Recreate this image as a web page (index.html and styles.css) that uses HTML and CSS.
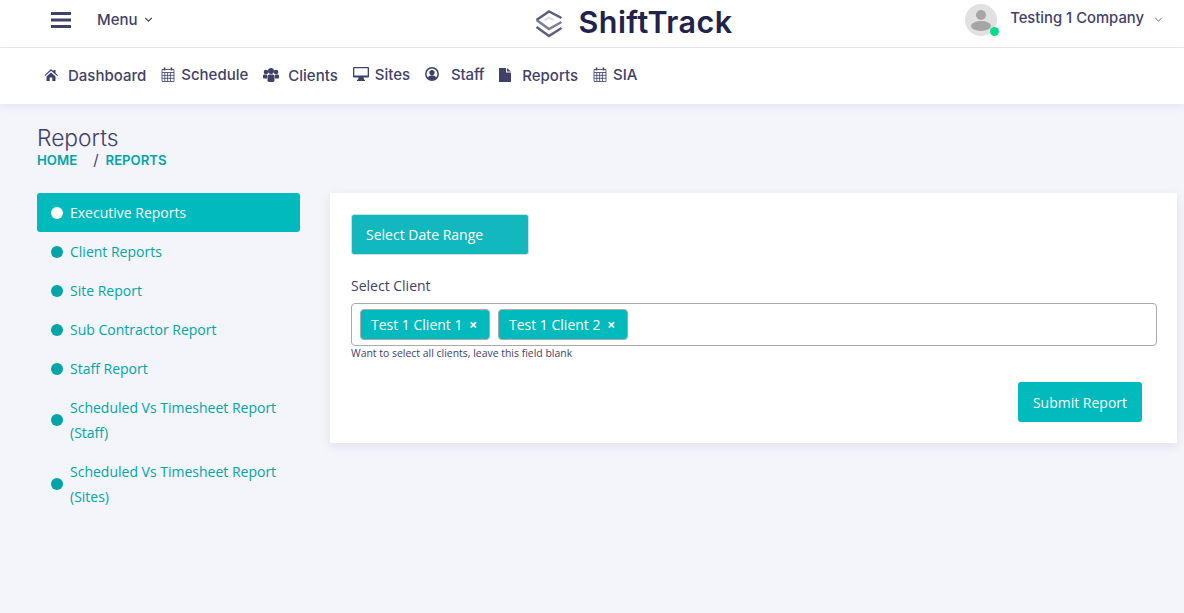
FILE: index.html
```html
<!DOCTYPE html>
<html lang="en">
<head>
  <meta charset="UTF-8" />
  <title>ShiftTrack Reports</title>
  <meta name="viewport" content="width=device-width, initial-scale=1" />
  <link rel="stylesheet" href="styles.css">
</head>
<body>

  <header class="topbar">
    <div class="topbar-left">
      <svg class="burger" width="20" height="16" viewBox="0 0 20 16"><path d="M0 0h20v3H0zM0 6.500h20v3H0zM0 13h20v3H0z" fill="#3f4168"/></svg>
      <span class="menu-label">Menu</span>
      <svg class="chevron" width="9" height="5" viewBox="0 0 10 6"><path d="M1 1l4 4 4-4" fill="none" stroke="#3f4168" stroke-width="1.400"/></svg>
    </div>
    <div class="brand">
      <svg width="28" height="28" viewBox="0 0 28 28">
        <path d="M1.500 10L14 1.500 26.500 8" fill="none" stroke="#5d5e80" stroke-width="2.500"/>
        <path d="M1.500 10L14 19l12.500-7" fill="none" stroke="#7b7c98" stroke-width="2.500"/>
        <path d="M9.500 10.500L14 7.500l4.500 3" fill="none" stroke="#d9d9e3" stroke-width="2"/>
        <path d="M1.500 17L14 26l12.500-8" fill="none" stroke="#5d5e80" stroke-width="2.500"/>
      </svg>
      <span class="brand-name">ShiftTrack</span>
    </div>
    <div class="user">
      <div class="avatar">
        <svg width="32" height="32" viewBox="0 0 32 32">
          <circle cx="16" cy="16" r="16" fill="#e1e1e1"/>
          <circle cx="16" cy="11" r="5" fill="#a5a5a5"/>
          <ellipse cx="16" cy="22" rx="10" ry="5" fill="#a5a5a5"/>
        </svg>
        <span class="status-dot"></span>
      </div>
      <span class="user-name">Testing 1 Company</span>
      <svg class="chevron" width="9" height="5" viewBox="0 0 10 6"><path d="M1 1l4 4 4-4" fill="none" stroke="#5f607f" stroke-width="1.100"/></svg>
    </div>
  </header>

  <nav class="mainnav">
    <a href="#" class="nav-link">
      <svg width="14" height="12" viewBox="0 0 14 12"><path d="M7 0l2.500 2.200V1h2v3l2.500 2.300-.7.800L7 1.800 1.200 7.100l-.7-.8zM2.500 7.500L7 3.400l4.500 4.100V12H8.300V8.500H5.700V12H2.500z" fill="#3f4168"/></svg>
      <span class="gap-10">Dashboard</span>
    </a>
    <a href="#" class="nav-link raised">
      <svg width="14" height="15" viewBox="0 0 14 15"><path d="M3.500 .5v3M10.500 .5v3" stroke="#3f4168" stroke-width="1.600" fill="none"/><path d="M1 2.500h12v12H1zM1 5.500h12M3.800 5.500v9M6.600 5.500v9M9.400 5.500v9M1 8.400h12M1 11.300h12" fill="none" stroke="#4c4e74" stroke-width=".9"/></svg>
      <span class="gap-6">Schedule</span>
    </a>
    <a href="#" class="nav-link">
      <svg width="16" height="14" viewBox="0 0 16 14"><g fill="#3f4168"><circle cx="3" cy="4" r="2.300"/><circle cx="13" cy="4" r="2.300"/><circle cx="8" cy="3" r="3"/><path d="M0 7.500C0 6.500 1 6.500 3 6.500c.7 0 1 .2 1 .5v3.500H1C.3 10.500 0 10 0 9.500zM16 7.500c0-1-1-1-3-1-.7 0-1 .2-1 .5v3.500h3c.7 0 1-.5 1-1z"/><path d="M4.500 8c0-1 1-1.500 3.500-1.500s3.500.5 3.500 1.500v4.500c0 1-1 1.500-3.500 1.500s-3.500-.5-3.500-1.500z"/></g></svg>
      <span class="gap-9">Clients</span>
    </a>
    <a href="#" class="nav-link raised">
      <svg width="16" height="14" viewBox="0 0 16 14"><path fill-rule="evenodd" d="M1 0h14a1 1 0 011 1v8.500a1 1 0 01-1 1h-4.500l.5 2 1 .5v1H4v-1l1-.5.500-2H1a1 1 0 01-1-1V1a1 1 0 011-1zm.3 1.300v7.200h13.400V1.300z" fill="#3f4168"/></svg>
      <span class="gap-6">Sites</span>
    </a>
    <a href="#" class="nav-link raised">
      <svg width="14" height="14" viewBox="0 0 14 14"><circle cx="7" cy="7" r="6.200" fill="none" stroke="#3f4168" stroke-width="1.500"/><circle cx="7" cy="5.500" r="2.600" fill="#3f4168"/><path d="M2.500 11c.8-2 2.500-2.800 4.500-2.800s3.700.8 4.500 2.800L7 13.500z" fill="#3f4168"/></svg>
      <span class="gap-12 tight">Staff</span>
    </a>
    <a href="#" class="nav-link">
      <svg width="12" height="14" viewBox="0 0 12 14"><path d="M0 0h7v4.500h5V14H0zM8 0l4 3.500H8z" fill="#3f4168"/></svg>
      <span class="gap-11">Reports</span>
    </a>
    <a href="#" class="nav-link raised">
      <svg width="14" height="15" viewBox="0 0 14 15"><path d="M3.500 .5v3M10.500 .5v3" stroke="#3f4168" stroke-width="1.600" fill="none"/><path d="M1 2.500h12v12H1zM1 5.500h12M3.800 5.500v9M6.600 5.500v9M9.400 5.500v9M1 8.400h12M1 11.300h12" fill="none" stroke="#4c4e74" stroke-width=".9"/></svg>
      <span class="gap-6">SIA</span>
    </a>
  </nav>

  <main class="page">
    <h1>Reports</h1>
    <div class="crumbs">
      <a href="#">HOME</a>
      <span class="crumb-sep">/</span>
      <a href="#">REPORTS</a>
    </div>

    <div class="columns">
      <ul class="side-list">
        <li class="active"><span class="dot"></span><a href="#">Executive Reports</a></li>
        <li><span class="dot"></span><a href="#">Client Reports</a></li>
        <li><span class="dot"></span><a href="#">Site Report</a></li>
        <li><span class="dot"></span><a href="#">Sub Contractor Report</a></li>
        <li><span class="dot"></span><a href="#">Staff Report</a></li>
        <li class="tall"><span class="dot"></span><a href="#">Scheduled Vs Timesheet Report (Staff)</a></li>
        <li class="tall"><span class="dot"></span><a href="#">Scheduled Vs Timesheet Report (Sites)</a></li>
      </ul>

      <section class="card">
        <button class="date-btn">Select Date Range</button>
        <label class="field-label">Select Client</label>
        <div class="tag-input">
          <span class="tag">Test 1 Client 1 <b>×</b></span>
          <span class="tag">Test 1 Client 2 <b>×</b></span>
        </div>
        <small class="hint">Want to select all clients, leave this field blank</small>
        <div class="actions">
          <button class="submit-btn">Submit Report</button>
        </div>
      </section>
    </div>
  </main>

</body>
</html>
```

FILE: styles.css
```css
/* Reset and base */
* {
  box-sizing: border-box;
  margin: 0;
  padding: 0;
}
html, body {
  height: 100%;
}
body {
  font-family: 'Open Sans', 'Noto Sans', sans-serif;
  font-size: 14px;
  background: #f4f5fa;
  color: #3f4168;
  overflow: hidden;
}
a {
  text-decoration: none;
  color: inherit;
}

/* Top bar */
.topbar {
  height: 48px;
  background: #fff;
  border-bottom: 1px solid #e6e6ee;
  display: grid;
  grid-template-columns: 1fr auto 1fr;
  align-items: center;
  font-family: Inter, 'Open Sans', sans-serif;
}
.topbar-left {
  display: flex;
  align-items: center;
  padding: 0 0 8px 51px;
}
.menu-label {
  margin-left: 26px;
  margin-right: 6px;
  font-size: 15px;
  font-weight: 500;
}
.brand {
  display: flex;
  align-items: center;
  margin-left: 83px;
}
.brand-name {
  margin-left: 16px;
  margin-bottom: 4px;
  font-size: 30.500px;
  font-weight: 600;
  color: #22234a;
  letter-spacing: .4px;
}
.user {
  justify-self: end;
  display: flex;
  align-items: center;
  padding: 0 21px 8px 0;
}
.avatar {
  position: relative;
  width: 32px;
  height: 32px;
  margin-right: 13px;
}
.avatar svg {
  display: block;
}
.status-dot {
  position: absolute;
  right: -2px;
  bottom: 0;
  width: 9px;
  height: 9px;
  border-radius: 50%;
  background: #0adc8f;
}
.user-name {
  font-size: 14.800px;
  font-weight: 500;
  margin-right: 10px;
  margin-bottom: 3px;
}

/* Main nav */
.mainnav {
  height: 56px;
  background: #fff;
  display: flex;
  align-items: center;
  gap: 15px;
  padding: 0 0 2px 44px;
  box-shadow: 0 3px 8px rgba(60, 60, 100, .08);
  font-family: Inter, 'Open Sans', sans-serif;
  font-size: 15px;
  font-weight: 500;
  position: relative;
}
.nav-link {
  display: flex;
  align-items: center;
}
.nav-link.raised {
  padding-bottom: 2px;
}
.gap-6 { margin-left: 6px; }
.gap-9 { margin-left: 9px; }
.gap-10 { margin-left: 10px; }
.gap-11 { margin-left: 11px; }
.gap-12 { margin-left: 12px; }
.tight { letter-spacing: -.2px; }

/* Page */
.page {
  padding: 21px 7px 0 37px;
}
h1 {
  font-family: Inter, 'Open Sans', sans-serif;
  font-size: 22.800px;
  font-weight: 300;
  line-height: 26px;
}
.crumbs {
  font-family: Inter, 'Open Sans', sans-serif;
  font-size: 13.200px;
  font-weight: 600;
  color: #00a5a8;
  line-height: 18px;
  margin-bottom: 24px;
  display: flex;
}
.crumb-sep {
  color: #3f4168;
  font-size: 15px;
  font-weight: 400;
  margin: 0 7px 0 16px;
}
.columns {
  display: flex;
  align-items: flex-start;
  gap: 30px;
}

/* Side list */
.side-list {
  list-style: none;
  width: 263px;
  flex-shrink: 0;
}
.side-list li {
  min-height: 39px;
  display: flex;
  align-items: center;
  padding: 0 14px;
  color: #00a5a8;
  line-height: 25px;
}
.side-list li.tall {
  min-height: 64px;
}
.side-list li.active {
  background: #00babd;
  color: #fff;
  border-radius: 3px;
}
.dot {
  width: 12px;
  height: 12px;
  border-radius: 50%;
  background: #00a5a8;
  margin-right: 7px;
  flex-shrink: 0;
}
.active .dot {
  background: #fff;
}

/* Card */
.card {
  flex: 1;
  height: 250px;
  background: #fff;
  padding: 21px 20px 0 21px;
  box-shadow: 0 3px 10px rgba(60, 60, 100, .1);
}
.date-btn {
  display: block;
  width: 178px;
  height: 41px;
  background: #12b8bd;
  border: 1px solid #c9dfe4;
  border-radius: 3px;
  color: #fff;
  font: inherit;
  text-align: left;
  padding-left: 14px;
}
.field-label {
  display: block;
  margin-top: 21px;
  line-height: 19px;
}
.tag-input {
  margin-top: 8px;
  height: 43px;
  border: 1px solid #aaa;
  border-radius: 4px;
  display: flex;
  align-items: center;
  gap: 8px;
  padding: 0 8px;
}
.tag {
  width: 130px;
  height: 31px;
  line-height: 29px;
  padding: 0 10px;
  background: #00babd;
  border: 1px solid #aaa;
  border-radius: 4px;
  color: #fff;
}
.tag b {
  font-size: 14px;
  margin-left: 3px;
}
.hint {
  display: block;
  font-size: 10.450px;
  line-height: 14px;
}
.actions {
  display: flex;
  justify-content: flex-end;
  margin-top: 22px;
  padding-right: 15px;
}
.submit-btn {
  width: 124px;
  height: 40px;
  background: #00babd;
  border: 0;
  border-radius: 3px;
  color: #fff;
  font: inherit;
}
```
